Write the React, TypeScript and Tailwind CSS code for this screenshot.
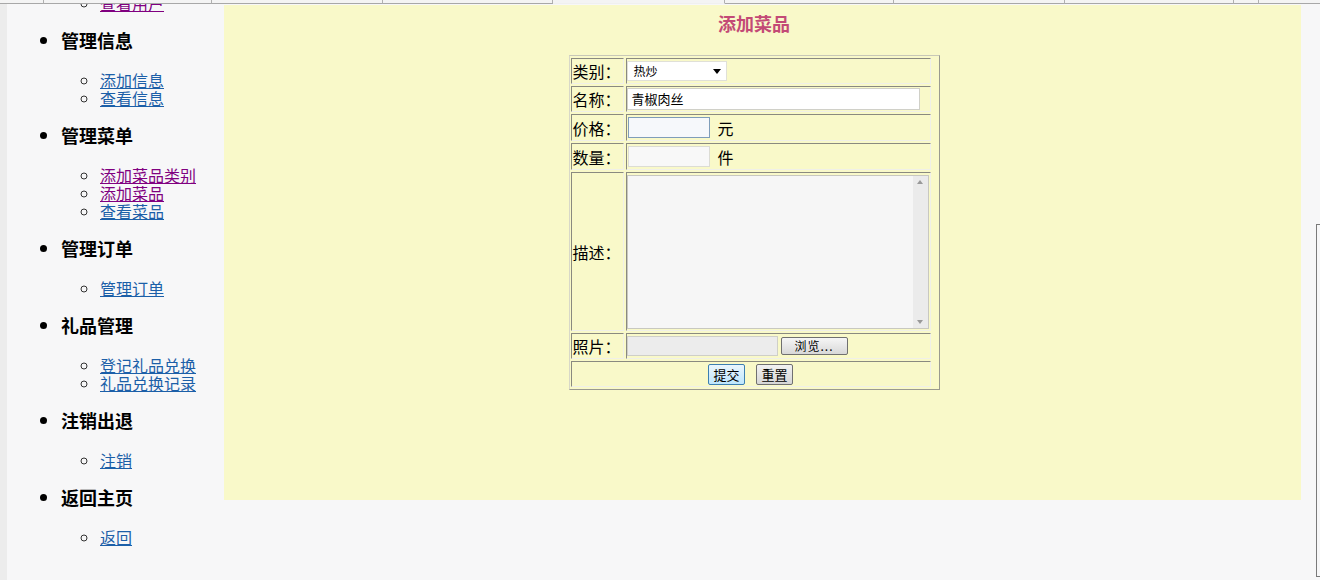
import React from 'react'

const CJK = { fontFamily: '"Noto Sans CJK SC", "Noto Sans", sans-serif' }

type Group = { title: string; links: { text: string; visited?: boolean }[] }

const GROUPS: Group[] = [
  { title: '管理信息', links: [{ text: '添加信息' }, { text: '查看信息' }] },
  {
    title: '管理菜单',
    links: [{ text: '添加菜品类别', visited: true }, { text: '添加菜品', visited: true }, { text: '查看菜品' }],
  },
  { title: '管理订单', links: [{ text: '管理订单' }] },
  { title: '礼品管理', links: [{ text: '登记礼品兑换' }, { text: '礼品兑换记录' }] },
  { title: '注销出退', links: [{ text: '注销' }] },
  { title: '返回主页', links: [{ text: '返回' }] },
]

// boundaries of the top frame's tabs
const TABS = [44, 168, 171, 170, 172, 169, 171, 169, 25]

function SubList({ links, first }: { links: Group['links']; first?: boolean }) {
  return (
    <ul className={`list-[circle] pl-[39px] ${first ? 'mt-0' : 'mt-[20px]'} mb-[18px] text-[16px] leading-[18px] font-normal`}>
      {links.map((l) => (
        <li key={l.text} className="h-[18px] text-[16px] leading-[18px] marker:text-[#333]">
          <a href="#" className={`underline ${l.visited ? 'text-[#800080]' : 'text-[#1c5fa8]'}`}>
            {l.text}
          </a>
        </li>
      ))}
    </ul>
  )
}

function Sidebar() {
  return (
    <div className="flex w-[224px] h-[576px] overflow-hidden bg-[#f7f7f8]">
      <div className="w-[7px] bg-[#ececec] shrink-0" />
      <ul className="list-disc pl-[54px] mt-[-10px] text-black text-[18px] leading-[21px]">
        <li className="list-none">
          <SubList links={[{ text: '查看用户', visited: true }]} first />
        </li>
        {GROUPS.map((g) => (
          <li key={g.title} className="text-[18px] leading-[21px]">
            <div className="h-[21px] text-[18px] leading-[21px] font-bold">{g.title}</div>
            <SubList links={g.links} />
          </li>
        ))}
      </ul>
    </div>
  )
}

function Cell({ children, className = '' }: { children?: React.ReactNode; className?: string }) {
  return (
    <div
      className={`flex items-center border border-t-[#8a8a80] border-l-[#8a8a80] border-r-[#f0f0e8] border-b-[#f0f0e8] ${className}`}
    >
      {children}
    </div>
  )
}

function Row({ label, h, children }: { label: string; h: string; children: React.ReactNode }) {
  return (
    <div className={`flex gap-[2px] ${h}`}>
      <Cell className="w-[53px] pl-[1px] text-[16px] text-black">{label}</Cell>
      <Cell className="w-[305px]">{children}</Cell>
    </div>
  )
}

function Form() {
  return (
    <div className="flex flex-col gap-[2px] w-[371px] pl-[1px] pr-[8px] pt-[2px] pb-[2px] border border-t-[#c8c8b8] border-l-[#d8d8c8] border-r-[#9a9a90] border-b-[#9a9a90]">
      <Row label="类别：" h="h-[26px]">
        <div className="flex items-center justify-between w-[100px] h-[20px] bg-white border border-[#e0e0d8] pl-[6px] pr-[5px] text-[12px]">
          <span>热炒</span>
          <svg width="8" height="5" viewBox="0 0 8 5">
            <path d="M0 0h8L4 5z" fill="#000" />
          </svg>
        </div>
      </Row>
      <Row label="名称：" h="h-[26px]">
        <div className="w-[293px] h-[22px] bg-white border border-[#d0d0c8] pl-[4px] text-[13px] leading-[20px]">
          青椒肉丝
        </div>
      </Row>
      <Row label="价格：" h="h-[27px]">
        <div className="ml-[1px] w-[82px] h-[21px] bg-[#f6f8fb] border border-[#7f9db9]" />
        <span className="ml-[8px] text-[16px]">元</span>
      </Row>
      <Row label="数量：" h="h-[27px]">
        <div className="ml-[1px] w-[82px] h-[21px] bg-[#f8f8f8] border border-[#dcdcd4]" />
        <span className="ml-[8px] text-[16px]">件</span>
      </Row>
      <Row label="描述：" h="h-[159px]">
        <div className="flex w-[302px] h-[154px] bg-[#f6f6f6] border border-[#c8c8c0]">
          <div className="flex-1" />
          <div className="flex flex-col justify-between items-center w-[15px] bg-[#ebebeb] py-[4px]">
            <svg width="6" height="4" viewBox="0 0 6 4">
              <path d="M0 4L3 0l3 4z" fill="#999" />
            </svg>
            <svg width="6" height="4" viewBox="0 0 6 4">
              <path d="M0 0h6L3 4z" fill="#999" />
            </svg>
          </div>
        </div>
      </Row>
      <Row label="照片：" h="h-[26px]">
        <div className="w-[151px] h-[20px] bg-[#ececec] border border-[#cfcfc8]" />
        <button className="ml-[3px] w-[67px] h-[18px] rounded-[2px] border border-[#707070] bg-gradient-to-b from-[#f6f6f6] to-[#d8d8d8] text-[12px] leading-[14px] tracking-[1px]">
          浏览...
        </button>
      </Row>
      <Cell className="h-[26px] w-[360px] justify-center gap-[11px]">
        <button className="w-[37px] h-[21px] rounded-[2px] border border-[#3c7fb1] bg-gradient-to-b from-[#eaf6fd] to-[#bee6fd] text-[13px] leading-[17px]">
          提交
        </button>
        <button className="w-[37px] h-[21px] rounded-[2px] border border-[#707070] bg-gradient-to-b from-[#f2f2f2] to-[#d6d6d6] text-[13px] leading-[17px]">
          重置
        </button>
      </Cell>
    </div>
  )
}

export default function App() {
  return (
    <div className="w-[1320px] h-[580px] overflow-hidden bg-[#f7f7f8] flex flex-col" style={CJK}>
      <div className="flex h-[4px] shrink-0 bg-[#f4f4f4]">
        {TABS.map((w, i) => (
          <div
            key={i}
            style={{ width: w }}
            className={`h-[4px] border-r border-[#b0b0b0] ${i === 4 ? 'border-b border-b-[#f0f0f0]' : 'border-b border-b-[#a8a8a8]'}`}
          />
        ))}
        <div className="flex-1 border-b border-[#a8a8a8]" />
      </div>
      <div className="flex">
        <Sidebar />
        <div className="mt-[1px] w-[1077px] h-[495px] bg-[#f9f9c9] pr-[17px] flex flex-col items-center">
          <div className="pt-[7px] text-[18px] leading-[22px] font-bold text-[#c34a76]">添加菜品</div>
          <div className="mt-[21px]">
            <Form />
          </div>
        </div>
        <div className="ml-[15px] mt-[220px] w-[4px] h-[353px] border-l border-t border-b border-[#7a7a7a]" />
      </div>
    </div>
  )
}
